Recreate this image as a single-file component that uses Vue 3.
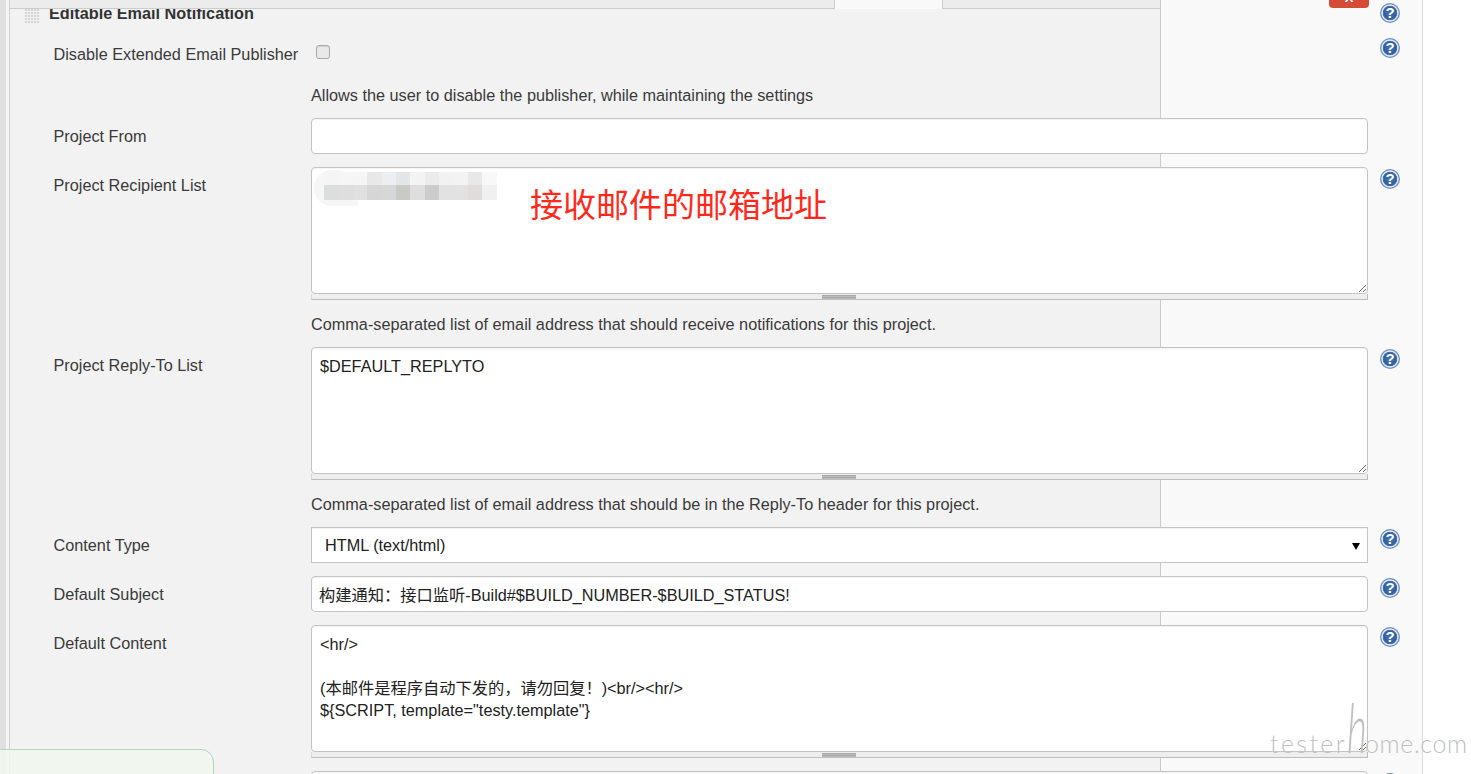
<template>
  <div class="page">
    <div class="form">
      <div class="row section-head">
        <span class="grip"></span>
        <span class="section-title">Editable Email Notification</span>
        <button type="button" class="delete-btn"><span>X</span></button>
        <span class="help">?</span>
      </div>

      <div class="row">
        <label class="label">Disable Extended Email Publisher</label>
        <div class="field"><input type="checkbox" class="check" /></div>
        <span class="help">?</span>
      </div>
      <div class="hint hint-first">Allows the user to disable the publisher, while maintaining the settings</div>

      <div class="row">
        <label class="label">Project From</label>
        <div class="field"><input type="text" class="text-input" /></div>
        <span class="help-spacer"></span>
      </div>

      <div class="row row-gap">
        <label class="label">Project Recipient List</label>
        <div class="field">
          <textarea class="area" readonly></textarea>
          <div class="handle"><span class="handle-grip"></span></div>
          <div class="blur-blob"></div>
          <div class="mosaic">
            <span
              v-for="(c, i) in mosaicCells"
              :key="i"
              class="cell"
              :style="{ background: c }"
            ></span>
          </div>
          <span class="annotation">接收邮件的邮箱地址</span>
        </div>
        <span class="help">?</span>
      </div>
      <div class="hint">Comma-separated list of email address that should receive notifications for this project.</div>

      <div class="row">
        <label class="label">Project Reply-To List</label>
        <div class="field">
          <textarea class="area" readonly>$DEFAULT_REPLYTO</textarea>
          <div class="handle"><span class="handle-grip"></span></div>
        </div>
        <span class="help">?</span>
      </div>
      <div class="hint">Comma-separated list of email address that should be in the Reply-To header for this project.</div>

      <div class="row">
        <label class="label">Content Type</label>
        <div class="field">
          <select class="select">
            <option>HTML (text/html)</option>
          </select>
          <span class="select-arrow"></span>
        </div>
        <span class="help">?</span>
      </div>

      <div class="row row-gap">
        <label class="label">Default Subject</label>
        <div class="field">
          <input type="text" class="text-input" value="构建通知：接口监听-Build#$BUILD_NUMBER-$BUILD_STATUS!" />
        </div>
        <span class="help">?</span>
      </div>

      <div class="row row-gap">
        <label class="label">Default Content</label>
        <div class="field">
          <textarea class="area" readonly :value="defaultContent"></textarea>
          <div class="handle"><span class="handle-grip"></span></div>
        </div>
        <span class="help">?</span>
      </div>

      <div class="row row-gap">
        <label class="label"></label>
        <div class="field"><input type="text" class="text-input" /></div>
        <span class="help"></span>
      </div>
    </div>

    <div class="tabbar">
      <div class="tab-rest tab-left"></div>
      <div class="tab-active"></div>
      <div class="tab-rest tab-right"></div>
    </div>

    <div class="toast"></div>

    <div class="watermark">tester<span class="wm-h">h</span><span class="wm-tail">ome.com</span></div>
  </div>
</template>

<script setup>
const defaultContent = '<hr/>\n\n(本邮件是程序自动下发的，请勿回复！)<br/><hr/>\n${SCRIPT, template="testy.template"}'

const mosaicCells = [
  '#f5f5f5', '#f6f6f6', '#f5f5f5', '#e8e8e8', '#eceeef', '#e4e5e6',
  '#f3f3f3', '#ebebeb', '#f2f2f2', '#f3f3f3', '#e8e8e8', '#f8f8f8',
  '#dcdddd', '#dedede', '#e0e0e0', '#d5d6d5', '#d5d7d8', '#c9c9c5',
  '#dedede', '#cdcccc', '#e2e2e3', '#e2e2e2', '#e0dcdc', '#f0f0f0'
]
</script>

<style>
html, body {
  margin: 0;
  overflow: hidden;
  background: #fff;
}
</style>

<style scoped>
.page {
  position: relative;
  width: 1471px;
  height: 774px;
  overflow: hidden;
  font-family: "Liberation Sans", "Noto Sans CJK SC", sans-serif;
  font-size: 16.25px;
  color: #3a3a3a;
  background: linear-gradient(to right,
    #e0e0e0 0 6px,
    #f6f6f6 6px 9px,
    #cfcfcf 9px 10px,
    #f2f2f2 10px 1160px,
    #cccccc 1160px 1161px,
    #f9f9f9 1161px 1422px,
    #dddddd 1422px 1423px,
    #ffffff 1423px);
}

.form {
  width: 1390px;
  padding-left: 10px;
}

.row {
  display: flex;
  align-items: flex-start;
}

.row-gap {
  margin-top: 13px;
}

.label {
  width: 301px;
  flex: none;
  box-sizing: border-box;
  padding-left: 43.5px;
  line-height: 36px;
  white-space: nowrap;
}

.field {
  position: relative;
  width: 1057px;
  flex: none;
  min-height: 36px;
}

.help {
  flex: none;
  width: 20px;
  height: 20px;
  margin: 2px 0 0 12px;
  box-sizing: border-box;
  border-radius: 50%;
  background: radial-gradient(closest-side at 50% 50%, #4a78b6 0, #2f5f9f 60%, #4f7ab3 70%, #d6e0ed 75%, #e4eaf3 82%, #7a9bc6 89%, #6287ba 100%);
  color: #fff;
  font-size: 15px;
  font-weight: 700;
  line-height: 20px;
  text-align: center;
}

.help-spacer {
  flex: none;
  width: 20px;
  margin-left: 12px;
}

/* section header, its top is cut by the tab bar */
.section-head {
  height: 35px;
  padding-top: 1px;
}

.section-head .help {
  margin-left: auto;
}

.grip {
  flex: none;
  width: 15px;
  height: 15px;
  margin: 8px 0 0 15px;
  background-image:
    linear-gradient(to bottom, transparent 0 2px, #f2f2f2 2px),
    linear-gradient(to right, #d4d4d4 0 2px, #f2f2f2 2px);
  background-size: 3px 3px;
}

.section-title {
  flex: none;
  margin-left: 9px;
  font-weight: 700;
  line-height: 24px;
  color: #333;
}

.delete-btn {
  position: absolute;
  top: 0;
  left: 1329px;
  width: 40px;
  height: 8px;
  padding: 0;
  overflow: hidden;
  border: none;
  border-radius: 0 0 4px 4px;
  background: #d64a38;
  color: #fff;
  font-family: inherit;
  font-size: 13px;
  font-weight: 700;
}

.delete-btn span {
  display: block;
  margin-top: -13px;
  line-height: 14px;
}

.check {
  display: block;
  appearance: none;
  box-sizing: border-box;
  width: 14px;
  height: 14px;
  margin: 9px 0 0 5px;
  border: 1px solid #aaa;
  border-radius: 3px;
  background: #e9e9e9;
  box-shadow: inset 0 1px 1px rgba(0, 0, 0, 0.1);
}

.hint {
  margin: 12px 0 11px 301px;
  line-height: 24px;
}

.hint-first {
  margin-top: 11px;
}

.text-input,
.area,
.select {
  display: block;
  box-sizing: border-box;
  width: 100%;
  margin: 0;
  border: 1px solid #c4c4c4;
  background: #fff;
  color: #222;
  font-family: inherit;
  font-size: 16.25px;
  outline: none;
  box-shadow: inset 0 1px 1px rgba(0, 0, 0, 0.05);
}

.text-input {
  height: 36px;
  padding: 0 7px;
  border-radius: 4px;
}

.area {
  height: 127px;
  padding: 7px 8px;
  border-radius: 4px;
  line-height: 22px;
  resize: vertical;
}

.handle {
  position: relative;
  box-sizing: border-box;
  height: 6px;
  background: #eeeeee;
  border: 1px solid #bdbdbd;
  border-top: none;
  border-left-color: #d8d8d8;
}

.handle-grip {
  position: absolute;
  top: 1px;
  left: 510px;
  width: 34px;
  height: 4px;
  background: repeating-linear-gradient(to bottom, #a8a8a8 0 1px, #bcbcbc 1px 2px);
}

/* blurred address, painted over the textarea */
.mosaic {
  position: absolute;
  top: 5px;
  left: 13px;
  display: grid;
  grid-template-columns: repeat(12, 14.4px);
  grid-template-rows: 13px 15px;
  filter: blur(0.4px);
}

.blur-blob {
  position: absolute;
  top: 3px;
  left: 3px;
  width: 44px;
  height: 36px;
  border-radius: 18px 22px 0 18px;
  background: #f6f6f6;
}

.annotation {
  position: absolute;
  top: 16px;
  left: 219px;
  font-size: 33px;
  line-height: 46px;
  white-space: nowrap;
  color: #ff2a1c;
}

.select {
  height: 36px;
  padding: 0 13px;
  appearance: none;
  border-radius: 0;
}

.select-arrow {
  position: absolute;
  top: 16px;
  left: 1041px;
  width: 0;
  height: 0;
  border-left: 4px solid transparent;
  border-right: 4px solid transparent;
  border-top: 7px solid #000;
}

.tabbar {
  position: absolute;
  top: 0;
  left: 10px;
  display: flex;
  width: 1150px;
  height: 9px;
}

.tab-rest {
  box-sizing: border-box;
  background: #ececec;
  border-bottom: 1px solid #cccccc;
}

.tab-left {
  width: 825px;
  border-right: 1px solid #cccccc;
}

.tab-active {
  width: 107px;
  background: #f9f9f9;
}

.tab-right {
  flex: 1;
  border-left: 1px solid #cccccc;
}

.toast {
  position: absolute;
  left: -1px;
  bottom: -12px;
  width: 213px;
  height: 35px;
  border: 1px solid #b2d6bf;
  border-radius: 0 13px 0 0;
  background: rgba(241, 248, 238, 0.85);
}

.watermark {
  position: absolute;
  left: 1270px;
  top: 726px;
  font-family: "Lato", "Open Sans", sans-serif;
  font-size: 25px;
  font-weight: 300;
  line-height: 30px;
  letter-spacing: 2.4px;
  white-space: nowrap;
  color: #c0c0c0;
  pointer-events: none;
}

.wm-h {
  display: inline-block;
  width: 18px;
  font-size: 70px;
  font-style: italic;
  line-height: 0;
  letter-spacing: 0;
  transform: scaleX(0.55);
  transform-origin: left bottom;
}

.wm-tail {
  letter-spacing: 0.6px;
}
</style>
